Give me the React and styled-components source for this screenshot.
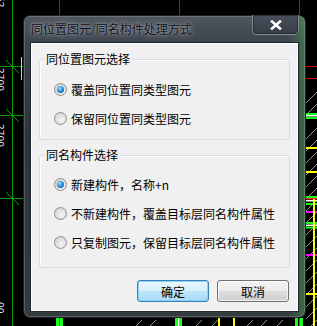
import React from 'react';
import styled, { createGlobalStyle } from 'styled-components';

const Global = createGlobalStyle`
  html, body {
    margin: 0;
    padding: 0;
    background: #000;
    overflow: hidden;
  }
  * { box-sizing: border-box; }
`;

// CAD canvas behind the dialog
const Desktop = styled.div`
  position: relative;
  width: 317px;
  height: 326px;
  padding: 15px 0 0 23px;
  font-family: 'Noto Sans CJK SC', 'Noto Sans', sans-serif;
`;

const Canvas = styled.svg`
  position: absolute;
  left: 0;
  top: 0;
`;

const Window = styled.div`
  position: relative;
  width: 283px;
  border: 1px solid #1c2128;
  border-radius: 7px;
  padding: 0 6px 5px 6px;
  background:
    linear-gradient(90deg, rgba(0,0,0,0) 94%, rgba(70,150,80,0.55) 100%),
    linear-gradient(180deg, #50565f 0, #3d434d 28px, #2d333b 120px, #343b3f 100%);
  box-shadow: inset 0 0 0 1px rgba(255,255,255,0.18);
`;

const TitleBar = styled.div`
  height: 26px;
  display: flex;
  justify-content: space-between;
  align-items: flex-start;
`;

const Title = styled.div`
  margin: 5px 0 0 1px;
  font-size: 12px;
  line-height: 16px;
  color: #0c1018;
  text-shadow: 0 0 6px rgba(210,214,220,0.75), 0 0 2px rgba(210,214,220,0.6);
`;

const CloseButton = styled.div`
  width: 47px;
  height: 20px;
  margin-top: -1px;
  border: 1px solid rgba(200,205,212,0.5);
  border-top: none;
  border-radius: 0 0 5px 5px;
  background: linear-gradient(180deg, #48505b, #363c46);
  box-shadow: inset 0 0 0 1px rgba(0,0,0,0.35);
  display: flex;
  align-items: center;
  justify-content: center;
`;

const Client = styled.div`
  height: 270px;
  border: 1px solid #1e242b;
  background: #f0f0f0;
  box-shadow: inset 0 0 0 1px #ffffff;
  padding: 16px 8px 0 8px;
  display: flex;
  flex-direction: column;
`;

const GroupBox = styled.div`
  position: relative;
  margin-top: ${p => p.$top || 0}px;
  border: 1px solid #d5dfe5;
  border-radius: 3px;
  box-shadow: inset 1px 1px 0 #fff;
  padding: ${p => p.$pad};
`;

const Legend = styled.span`
  position: absolute;
  left: 4px;
  top: -9px;
  padding: 0 2px;
  background: #f0f0f0;
  font-size: 12px;
  line-height: 16px;
  color: #000;
`;

const Option = styled.div`
  height: 29px;
  display: flex;
  align-items: center;
  padding-left: 14px;
  gap: 4px;
  font-size: 12px;
  color: #000;
  white-space: nowrap;
`;

const Radio = styled.span`
  width: 13px;
  height: 13px;
  border-radius: 50%;
  border: 1px solid #8e8f8f;
  background: radial-gradient(circle at 60% 65%, #f4f4f4 0, #d8d8d8 70%, #c8c8c8 100%);
  display: flex;
  align-items: center;
  justify-content: center;
  flex: none;

  &::after {
    content: '';
    width: 7px;
    height: 7px;
    border-radius: 50%;
    background: ${p => (p.$checked
      ? 'radial-gradient(circle at 40% 35%, #9fe2ff 0, #2f8fd6 45%, #0c4e9a 100%)'
      : 'transparent')};
  }
`;

const ButtonRow = styled.div`
  margin-top: 12px;
  display: flex;
  justify-content: flex-end;
  gap: 8px;
  padding-right: 1px;
`;

const Button = styled.div`
  width: 72px;
  height: 22px;
  border-radius: 3px;
  border: 1px solid ${p => (p.$primary ? '#3c7fb1' : '#707070')};
  background: ${p => (p.$primary
    ? 'linear-gradient(180deg, #eaf6fd 0, #d9f0fc 50%, #bee6fd 50%, #a7d9f5 100%)'
    : 'linear-gradient(180deg, #f2f2f2 0, #ebebeb 50%, #dddddd 50%, #cfcfcf 100%)')};
  box-shadow: inset 0 0 0 1px ${p => (p.$primary ? 'rgba(130,210,250,0.9)' : 'rgba(255,255,255,0.7)')};
  display: flex;
  align-items: center;
  justify-content: center;
  font-size: 12px;
  color: #000;
`;

const Background = () => (
  <Canvas width="317" height="326" viewBox="0 0 317 326">
    <rect width="317" height="326" fill="#000" />
    {/* left dimension line */}
    <line x1="12.5" y1="0" x2="12.5" y2="326" stroke="#0a9a0a" />
    {[66, 115, 198].map(y => (
      <g key={y}>
        <line x1="0" y1={y + 0.5} x2="24" y2={y + 0.5} stroke="#0a9a0a" />
        <line x1="6" y1={y - 6} x2="19" y2={y + 7} stroke="#0a9a0a" />
      </g>
    ))}
    <line x1="21.5" y1="57" x2="21.5" y2="80" stroke="#d0d0d0" />
    <g fill="#e8e8e8" fontSize="9" fontFamily="DejaVu Sans, sans-serif">
      <text transform="translate(-3 -4) rotate(90)">52</text>
      <text transform="translate(-3 68) rotate(90)">2700</text>
      <text transform="translate(-3 124) rotate(90)">2700</text>
      <text transform="translate(-3 302) rotate(90)">00</text>
    </g>
    {/* top red axes */}
    {[59, 179, 299].map(x => (
      <line key={x} x1={x + 0.5} y1="0" x2={x + 0.5} y2="20" stroke="#e00000" />
    ))}
    {/* right side */}
    <line x1="304" y1="66.5" x2="317" y2="66.5" stroke="#e00000" />
    <line x1="304" y1="78.5" x2="317" y2="78.5" stroke="#e00000" />
    {[95, 107, 131, 143, 155, 167, 179, 191, 203, 215, 227, 239, 251, 263, 275, 287, 299, 311, 323].map(y => (
      <line key={y} x1="306" y1={y + 8} x2="317" y2={y - 3} stroke="#bdbdbd" strokeWidth="0.8" />
    ))}
    <rect x="306" y="113" width="11" height="2" fill="#1aff1a" />
    <rect x="306" y="115" width="11" height="1.5" fill="#ffffff" />
    <rect x="306" y="117" width="11" height="2" fill="#1aff1a" />
    <rect x="306" y="147" width="11" height="2" fill="#ffff00" />
    <rect x="306" y="171" width="11" height="2" fill="#ffff00" />
    <rect x="306" y="196" width="11" height="2" fill="#1aff1a" />
    <rect x="306" y="198" width="11" height="1.5" fill="#ff2020" />
    <rect x="306" y="200" width="11" height="1.5" fill="#ffffff" />
    <rect x="306" y="203" width="11" height="2" fill="#1aff1a" />
    <rect x="306" y="211" width="11" height="2" fill="#ff00ff" />
    <rect x="306" y="222" width="11" height="2" fill="#1aff1a" />
    <rect x="306" y="224.5" width="11" height="1.5" fill="#ffffff" />
    <rect x="306" y="226.5" width="11" height="2" fill="#1aff1a" />
    <rect x="306" y="254" width="11" height="2" fill="#ff00ff" />
    <rect x="306" y="293" width="11" height="2" fill="#ffff00" />
    <rect x="313" y="199" width="2" height="127" fill="#ffff00" />
    {/* bottom strip */}
    {[196, 212, 247, 261, 277, 150, 136].map(x => (
      <line key={x} x1={x} y1="326" x2={x + 6} y2="320" stroke="#bdbdbd" strokeWidth="0.8" />
    ))}
    <rect x="56" y="318" width="3" height="8" fill="#1aff1a" />
    <rect x="59" y="318" width="1" height="8" fill="#ff2020" />
    <rect x="60" y="318" width="3" height="8" fill="#1aff1a" />
    <rect x="175" y="318" width="3" height="8" fill="#1aff1a" />
    <rect x="178" y="318" width="1" height="8" fill="#ffffff" />
    <rect x="179" y="318" width="3" height="8" fill="#1aff1a" />
    <rect x="218" y="318" width="2" height="8" fill="#ffff00" />
    <rect x="233" y="318" width="2" height="8" fill="#ffff00" />
    <rect x="295" y="318" width="3" height="8" fill="#1aff1a" />
    <rect x="299" y="318" width="1" height="8" fill="#ff2020" />
    <rect x="300" y="318" width="3" height="8" fill="#1aff1a" />
  </Canvas>
);

const CloseIcon = () => (
  <svg width="12" height="10" viewBox="0 0 12 10">
    <path d="M2 1.5 L10 8.5 M10 1.5 L2 8.5" stroke="#ffffff" strokeWidth="2.6" strokeLinecap="square" />
  </svg>
);

const groups = [
  {
    legend: '同位置图元选择',
    top: 0,
    pad: '15px 0 6px 0',
    options: ['覆盖同位置同类型图元', '保留同位置同类型图元'],
    checked: 0,
  },
  {
    legend: '同名构件选择',
    top: 15,
    pad: '14px 0 10px 0',
    options: ['新建构件，名称+n', '不新建构件，覆盖目标层同名构件属性', '只复制图元，保留目标层同名构件属性'],
    checked: 0,
  },
];

export default function App() {
  return (
    <>
      <Global />
      <Desktop>
        <Background />
        <Window>
          <TitleBar>
            <Title>同位置图元/同名构件处理方式</Title>
            <CloseButton><CloseIcon /></CloseButton>
          </TitleBar>
          <Client>
            {groups.map(g => (
              <GroupBox key={g.legend} $top={g.top} $pad={g.pad}>
                <Legend>{g.legend}</Legend>
                {g.options.map((o, i) => (
                  <Option key={o}>
                    <Radio $checked={i === g.checked} />
                    {o}
                  </Option>
                ))}
              </GroupBox>
            ))}
            <ButtonRow>
              <Button $primary>确定</Button>
              <Button>取消</Button>
            </ButtonRow>
          </Client>
        </Window>
      </Desktop>
    </>
  );
}
